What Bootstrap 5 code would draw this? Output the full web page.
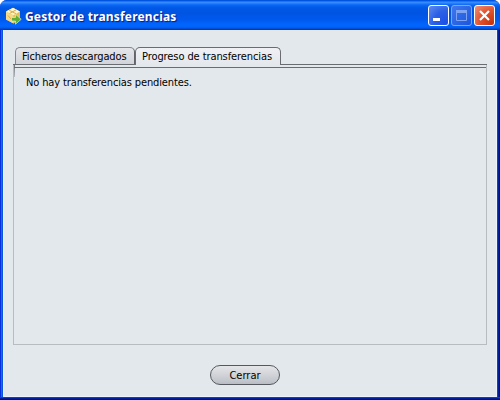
<!DOCTYPE html>
<html lang="es">
<head>
<meta charset="utf-8">
<meta name="viewport" content="width=device-width, initial-scale=1">
<title>Gestor de transferencias</title>
<link href="https://cdn.jsdelivr.net/npm/bootstrap@5.3.0/dist/css/bootstrap.min.css" rel="stylesheet">
<style>
body{background:#fff;font-family:"DejaVu Sans Condensed","DejaVu Sans",sans-serif;font-stretch:condensed;font-size:11px;line-height:14px;color:#000}
.window{width:500px;height:400px;border-radius:7px 7px 0 0;background:linear-gradient(90deg,#0831d9 0 1px,#166aee 1px 2px,#0855dd 2px 3px,#0048e0 3px 497px,#0a3fcf 497px 498px,#001ea0 498px 499px,#00138c 499px);padding:0 3px 3px;box-shadow:inset 0 -1px #00138c,inset 0 -2px #001ea0,inset 0 -3px #0a3fcf}
.titlebar{height:30px;margin:0 -3px;padding:2px 5px 0 5px;border-radius:7px 7px 0 0;background:linear-gradient(#0050d8 0,#0058e8 1px,#3c90ff 2px,#2c86ff 3px,#0a66f4 5px,#0058e6 8px,#0054e2 13px,#0058ec 19px,#0064fc 24px,#0066ff 26px,#005be8 28px,#003ec4 29px,#0036b8 30px)}
.caption-text{margin-left:3px;padding-top:1px;font-family:"Noto Sans","Open Sans",sans-serif;font-stretch:normal;font-weight:700;font-size:12px;line-height:18px;color:#fff;text-shadow:1px 1px 1px #0a1883;white-space:nowrap;letter-spacing:.18px}
.winbtns{column-gap:2px;margin-top:-2px}
.winbtn{width:21px;height:21px;border:1px solid #fff;border-radius:3px;padding:0;display:block;line-height:0;background:radial-gradient(circle at 90% 90%,#1c50e8 0,#2a5fe6 50%,#5f8cf0 100%)}
.winbtn svg{display:block}
.winbtn.dim{border-color:#7fa5f2;background:linear-gradient(135deg,#3f78ee,#1c55dc)}
.winbtn.shut{background:radial-gradient(circle at 90% 90%,#c8340c 0,#e0512c 50%,#f09278 100%)}
.client{height:367px;background:#e3e8ec;border:solid #edf3fa;border-width:0 1px 1px;padding:17px 9px 0}
.nav-tabs.sheet{border:0;border-bottom:1px solid #696c71;padding-left:2px;height:18px}
.sheet .nav-link{height:17px;margin:0;padding:2px 0 0 6px;color:#000;border:1px solid #85878c;border-right-color:#606368;border-bottom:0;border-radius:5px 5px 0 0;background:linear-gradient(#e5e6ea,#d1d4da);line-height:14px;white-space:nowrap;letter-spacing:-.09px}
.sheet .nav-link.first{width:120px}
.sheet .nav-link.active{width:146px;height:18px;border-color:#6a6c71;color:#000;background:linear-gradient(#f0f1f4,#e3e8ec)}
.pane{height:280px;border:1px solid #b5bdc1;border-top:0;padding:2px 0 0 12px;background:linear-gradient(#70737a,#b5bdc1) 0 0/1px 12px no-repeat}
.rule{height:1px;background:#696c71;margin-left:-12px;margin-bottom:8px}
.message{letter-spacing:-.13px}
.pill{width:70px;height:20px;margin-top:20px;margin-left:197px;padding:1px 0 0;border:1px solid #55585d;border-radius:10px;background:linear-gradient(#e5e6e8,#c4c7cd 80%,#b9bcc2);font-size:11px;line-height:17px;color:#000}
</style>
<script src="https://cdn.jsdelivr.net/npm/bootstrap@5.3.0/dist/js/bootstrap.bundle.min.js"></script>
</head>
<body class="m-0 overflow-hidden">
<div class="window">
  <header class="titlebar d-flex align-items-center">
    <svg width="17" height="18" viewBox="0 0 17 18" class="flex-shrink-0"><path d="M8 .8 15 4.4V12L8.5 16.6 1 12.4V4.6Z" fill="#e9bf55"/><path d="M8 .8 15 4.4 8.3 8.3 1 4.6Z" fill="#fff7cf"/><path d="M1 4.6 8.3 8.3 8.5 16.6 1 12.4Z" fill="#f6d98a"/><path d="M4.2 3.2 11 6.7M11.4 2.7 4.7 6.4M3 8.5 7 13" stroke="#dca94a" fill="none"/><path d="M6.5 10.5h4V7.3l5.7 5-5.7 4.9V14h-4Z" fill="#5fae35" stroke="#e3f2b8" stroke-width=".7"/></svg>
    <span class="caption-text flex-grow-1">Gestor de transferencias</span>
    <div class="winbtns d-flex">
      <button class="winbtn" aria-label="Minimizar"><svg width="19" height="19"><path d="M4 12h7v3H4z" fill="#fff"/></svg></button>
      <button class="winbtn dim" aria-label="Maximizar"><svg width="19" height="19"><path d="M4.5 5.5h10v9h-10zM4 6h11" fill="none" stroke="#7da3f3"/><path d="M4 4h11v3H4z" fill="#7da3f3"/></svg></button>
      <button class="winbtn shut" aria-label="Salir"><svg width="19" height="19"><path d="m5 5 9 9M14 5l-9 9" stroke="#fff" stroke-width="2.2"/></svg></button>
    </div>
  </header>
  <main class="client">
    <ul class="nav nav-tabs sheet flex-nowrap">
      <li class="nav-item"><a class="nav-link first">Ficheros descargados</a></li>
      <li class="nav-item"><a class="nav-link active">Progreso de transferencias</a></li>
    </ul>
    <section class="pane"><div class="rule"></div><span class="message">No hay transferencias pendientes.</span></section>
    <button class="btn pill d-block">Cerrar</button>
  </main>
</div>
</body>
</html>
